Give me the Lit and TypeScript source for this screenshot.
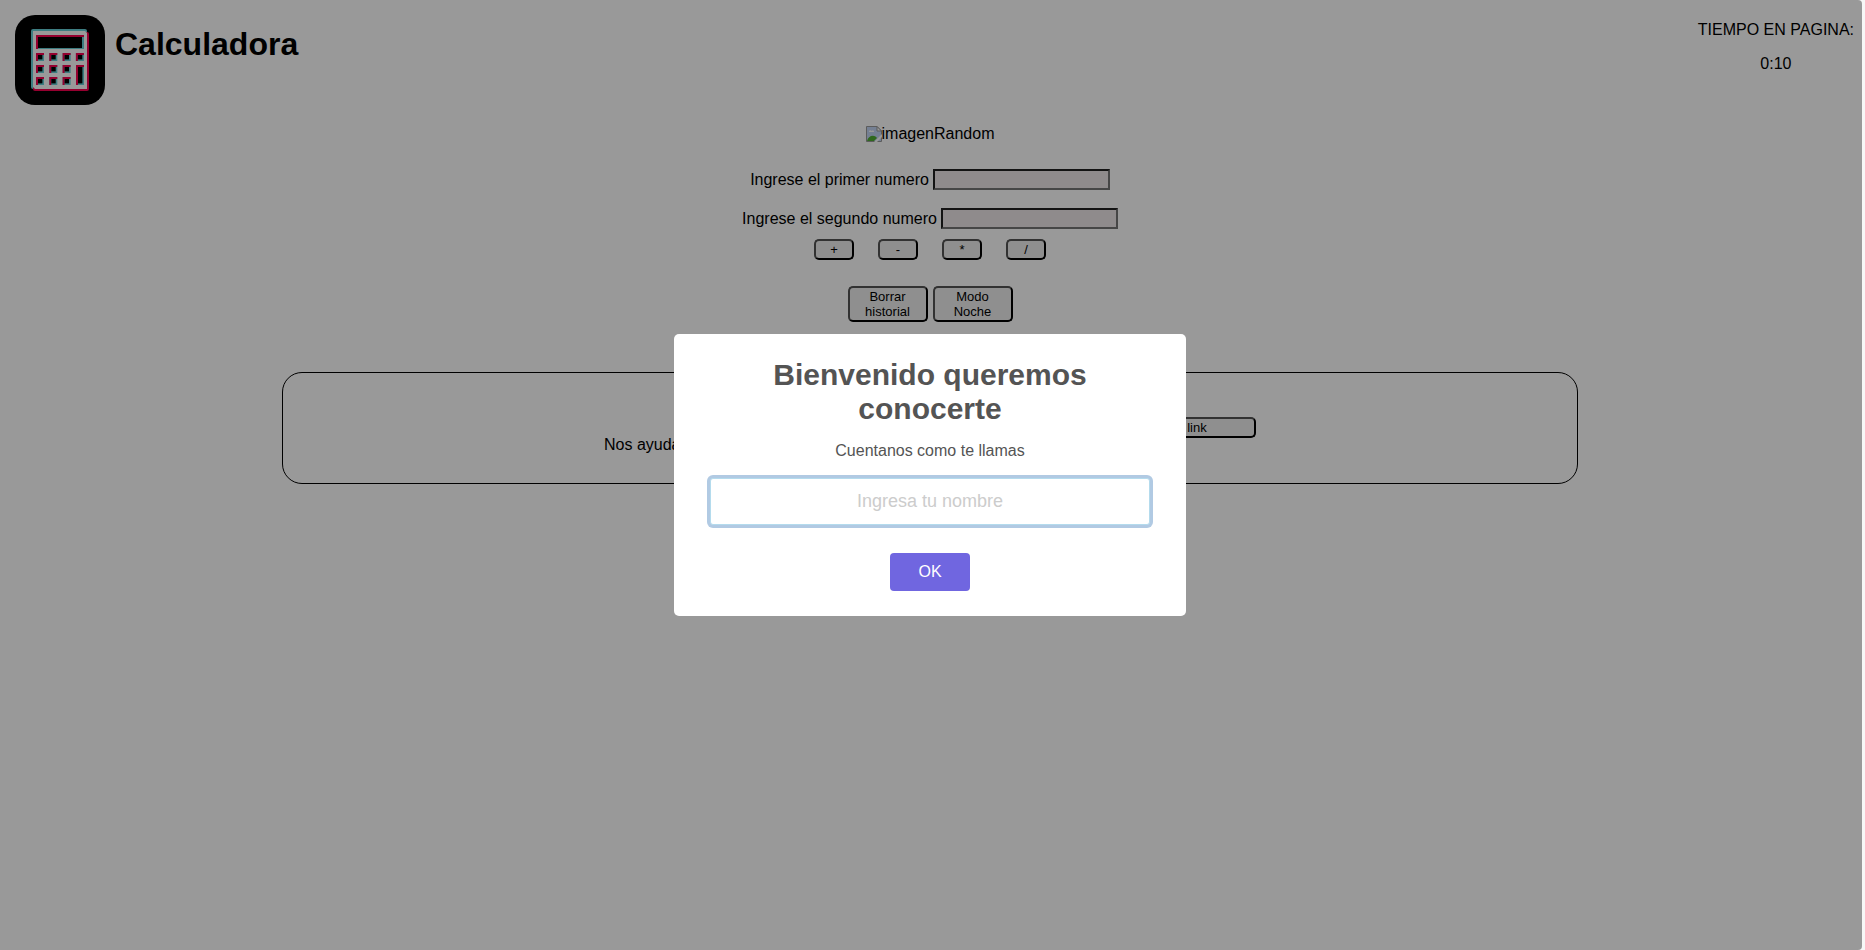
import { LitElement, html, css, svg } from "lit";
import { customElement, state } from "lit/decorators.js";

const KEYS: Array<[number, number]> = [];
for (let row = 0; row < 3; row++) {
  for (let col = 0; col < 4; col++) {
    if (col === 3 && row > 0) continue;
    KEYS.push([21 + col * 13.3, 38 + row * 12]);
  }
}

@customElement("app-root")
export class AppRoot extends LitElement {
  @state() private seconds = 10;

  static styles = css`
    :host {
      display: block;
      min-height: 100vh;
      background: #f7f7f7;
      font: 16px/18px "Liberation Sans", Arial, sans-serif;
      color: #000;
      box-sizing: border-box;
      padding-right: 3px;
    }
    .page {
      min-height: 100vh;
      background: #fff;
      border-radius: 0 4px 4px 0;
    }
    header {
      display: flex;
      align-items: flex-start;
      padding: 15px 8px 0 15px;
      gap: 10px;
    }
    .logo {
      width: 90px;
      height: 90px;
      display: block;
    }
    h1 {
      font-size: 32px;
      line-height: 36px;
      margin: 11px 0 0;
    }
    .time {
      margin-left: auto;
      padding-top: 6px;
      display: flex;
      flex-direction: column;
      gap: 16px;
      text-align: center;
    }
    p {
      margin: 0;
    }
    main {
      display: flex;
      flex-direction: column;
      align-items: center;
      padding: 0 6px 0 4px;
    }
    .picture {
      display: flex;
      align-items: center;
      margin-top: 20px;
    }
    .field {
      display: flex;
      align-items: center;
      gap: 4px;
      height: 21px;
      margin-top: 18px;
    }
    .field.first {
      margin-top: 26px;
    }
    .field input {
      box-sizing: border-box;
      width: 177px;
      height: 21px;
      background: #eee8e9;
      border: 2px inset #767676;
      padding: 1px 2px;
    }
    .page button {
      box-sizing: border-box;
      font: 13px/15px "Liberation Sans", Arial, sans-serif;
      min-height: 21px;
      padding: 1px 6px;
      background: #efefef;
      color: #000;
      border: 2px outset #000;
      border-radius: 5px;
    }
    .ops {
      display: flex;
      gap: 24px;
      margin-top: 10px;
    }
    .ops button {
      width: 40px;
    }
    .actions {
      display: flex;
      gap: 5px;
      margin-top: 26px;
    }
    .actions button {
      width: 80px;
      height: 36px;
    }
    .share {
      box-sizing: border-box;
      width: 70%;
      min-height: 112px;
      margin-top: 50px;
      border: 1px solid #000;
      border-radius: 20px;
      display: flex;
      justify-content: center;
      align-items: flex-start;
      padding: 44px 20px 28px;
    }
    .share-row {
      display: flex;
      justify-content: space-between;
      align-items: flex-start;
      width: 652px;
    }
    .share p {
      padding-top: 19px;
    }
    .share button {
      width: 160px;
    }
    .overlay {
      position: fixed;
      inset: 0 3px 0 0;
      background: rgba(0, 0, 0, 0.4);
      border-radius: 0 4px 4px 0;
      display: flex;
      align-items: center;
      justify-content: center;
      padding-right: 2px;
    }
    .modal {
      box-sizing: border-box;
      width: 512px;
      max-width: 100%;
      background: #fff;
      border-radius: 5px;
      color: #545454;
      display: flex;
      flex-direction: column;
      align-items: center;
      padding: 24px 36px 25px;
      text-align: center;
    }
    h2 {
      font-size: 30px;
      line-height: 34px;
      margin: 0;
    }
    .modal label {
      margin-top: 16px;
    }
    .modal input {
      box-sizing: border-box;
      width: 100%;
      height: 47px;
      margin-top: 18px;
      border: 1px solid #b4dbed;
      border-radius: 3px;
      box-shadow: 0 0 0 3px #b1cae3;
      outline: none;
      text-align: center;
      font: 18px "Liberation Sans", Arial, sans-serif;
      color: #545454;
    }
    .modal input::placeholder {
      color: #ccc;
    }
    .ok {
      width: 80px;
      height: 38px;
      margin-top: 28px;
      padding: 0;
      border: 0;
      border-radius: 4px;
      background: #7066e0;
      color: #fff;
      font: 16px "Liberation Sans", Arial, sans-serif;
    }
  `;

  private logo() {
    return html`<svg class="logo" viewBox="0 0 90 90" role="img" aria-label="Calculadora">
      <rect width="90" height="90" rx="20" fill="#000" />
      <rect x="16" y="14" width="56" height="60" rx="2" fill="#66d0d8" />
      <rect x="18" y="17" width="56" height="59" rx="2" fill="#f8004f" />
      <path d="M18 16H70L72 18V74H20L18 72Z" fill="#fff" />
      <path d="M21 20H69V34H21Z" fill="#66d0d8" />
      <path d="M21 20H69V22H23V34H21Z" fill="#f8004f" />
      <rect x="23" y="22" width="44" height="11" />
      ${KEYS.map(
        ([x, y]) => svg`
          <rect x=${x} y=${y} width="8" height="8" fill="#66d0d8" />
          <path d=${`M${x} ${y}h8v2h-6v6h-2z`} fill="#f8004f" />
          <rect x=${x + 2} y=${y + 2} width="4.400" height="4.400" />`
      )}
      <rect x="61" y="50" width="8" height="20" fill="#66d0d8" />
      <path d="M61 50h8v2h-6V70H61z" fill="#f8004f" />
      <rect x="63" y="52" width="4.400" height="16.400" />
    </svg>`;
  }

  private clock() {
    return `${Math.floor(this.seconds / 60)}:${String(this.seconds % 60).padStart(2, "0")}`;
  }

  render() {
    return html`
      <div class="page">
        <header>
          ${this.logo()}
          <h1>Calculadora</h1>
          <div class="time">
            <p>TIEMPO EN PAGINA:</p>
            <p>${this.clock()}</p>
          </div>
        </header>
        <main>
          <div class="picture">
            <svg width="16" height="16" viewBox="0 0 16 16" aria-hidden="true">
              <path d="M.5.5H11L15.500 5V15.500H.5Z" fill="#c3d5f5" stroke="#999" />
              <path d="M11 .5V5h4.500Z" fill="#fff" stroke="#999" />
              <path d="M3 6c0-2 2-2 2.500-1C7 4 8.500 5 8 6Z" fill="#fff" />
              <path d="M1 15c1-5 7-7 10-3l-3 3Z" fill="#4fae32" />
              <path d="M8 16l8-8v3l-5 5Z" fill="#fff" />
            </svg>
            <span>imagenRandom</span>
          </div>
          <div class="field first">
            <label for="n1">Ingrese el primer numero</label>
            <input id="n1" type="text" />
          </div>
          <div class="field">
            <label for="n2">Ingrese el segundo numero</label>
            <input id="n2" type="text" />
          </div>
          <div class="ops">
            ${["+", "-", "*", "/"].map((op) => html`<button type="button">${op}</button>`)}
          </div>
          <div class="actions">
            <button type="button">Borrar historial</button>
            <button type="button">Modo Noche</button>
          </div>
          <section class="share">
            <div class="share-row">
              <p>Nos ayudas compartiendo</p>
              <button type="button">Copiar link</button>
            </div>
          </section>
        </main>
      </div>
      <div class="overlay">
        <div class="modal" role="dialog" aria-modal="true" aria-labelledby="title">
          <h2 id="title">Bienvenido queremos conocerte</h2>
          <label for="name">Cuentanos como te llamas</label>
          <input id="name" type="text" placeholder="Ingresa tu nombre" />
          <button class="ok" type="button">OK</button>
        </div>
      </div>
    `;
  }
}
